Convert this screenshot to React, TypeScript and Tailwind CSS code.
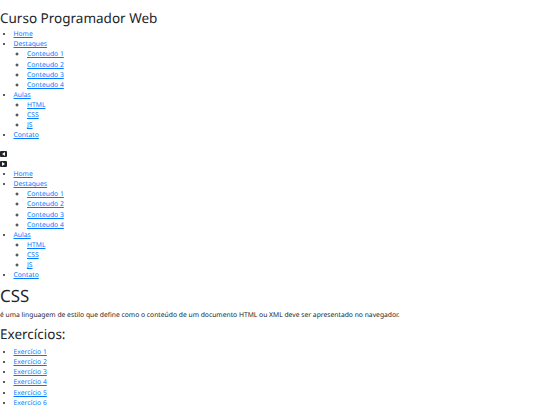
const menu = [
  { label: "Home" },
  { label: "Destaques", sub: ["Conteudo 1", "Conteudo 2", "Conteudo 3", "Conteudo 4"] },
  { label: "Aulas", sub: ["HTML", "CSS", "JS"] },
  { label: "Contato" },
];

const exercises = ["Exercício 1", "Exercício 2", "Exercício 3", "Exercício 4", "Exercício 5", "Exercício 6"];

function Link({ children }: { children: string }) {
  return (
    <a href="#" className="text-[#007bff] underline">
      {children}
    </a>
  );
}

function Menu() {
  return (
    <ul className="list-disc pl-[13.5px]">
      {menu.map((item) => (
        <li key={item.label}>
          <Link>{item.label}</Link>
          {item.sub && (
            <ul className="list-[circle] pl-[13.5px]">
              {item.sub.map((s) => (
                <li key={s}>
                  <Link>{s}</Link>
                </li>
              ))}
            </ul>
          )}
        </li>
      ))}
    </ul>
  );
}

function ArrowButton({ left }: { left?: boolean }) {
  return (
    <div className="flex h-[6px] w-[7px] items-center justify-center rounded-[1px] bg-[#212529]">
      <svg width="3" height="4" viewBox="0 0 3 4">
        <path d={left ? "M3 0 L0 2 L3 4 Z" : "M0 0 L3 2 L0 4 Z"} fill="#fff" />
      </svg>
    </div>
  );
}

export default function App() {
  return (
    <div className="h-[405px] w-[540px] overflow-hidden bg-white font-['Noto_Sans',sans-serif] text-[6.75px] leading-[10.125px] text-[#212529] [text-rendering:geometricPrecision]">
      <h1 className="pt-[10px] text-[13.5px] leading-[16.2px]">Curso Programador Web</h1>
      <div className="mt-[3px]">
        <Menu />
      </div>
      <div className="mt-[10px] flex flex-col gap-[4px]">
        <ArrowButton left />
        <ArrowButton />
      </div>
      <div className="mt-[2.5px]">
        <Menu />
      </div>
      <h1 className="mt-[6px] text-[16.875px] leading-[20.25px]">CSS</h1>
      <p className="mt-[3px]">
        é uma linguagem de estilo que define como o conteúdo de um documento HTML ou XML deve ser apresentado no navegador.
      </p>
      <h2 className="mt-[6px] text-[13.5px] leading-[16.2px]">Exercícios:</h2>
      <ul className="mt-[5px] list-disc pl-[13.5px]">
        {exercises.map((e) => (
          <li key={e}>
            <Link>{e}</Link>
          </li>
        ))}
      </ul>
    </div>
  );
}
